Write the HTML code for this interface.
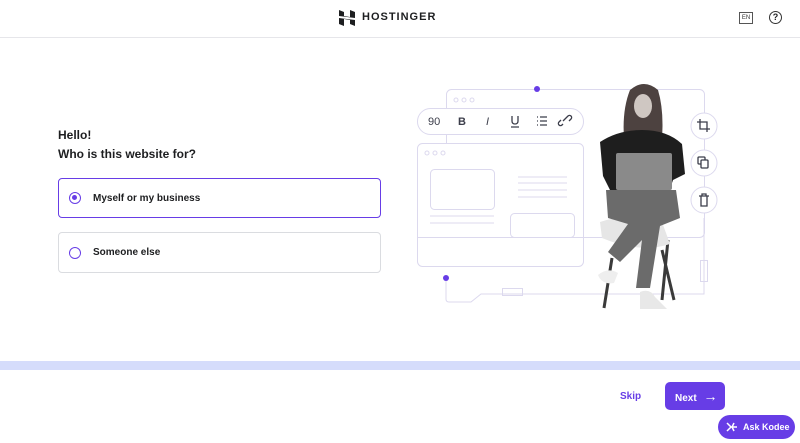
<!DOCTYPE html>
<html><head><meta charset="utf-8"><style>
*{margin:0;padding:0;box-sizing:border-box}
body{width:800px;height:443px;overflow:hidden;background:#fff;font-family:"Liberation Sans",sans-serif;color:#1d1e20;position:relative}
.abs{position:absolute}
.hdr{left:0;top:0;width:800px;height:38px;border-bottom:1px solid #e6e6ea}
.opt{position:absolute;left:58px;width:323px;border-radius:4px;font-size:10px;font-weight:bold;display:flex;align-items:center;padding-left:10px}
.radio{width:12px;height:12px;border-radius:50%;border:1.5px solid #673de6;margin-right:12px;position:relative}
</style></head><body>
<div class="abs hdr"></div>
<svg class="abs" style="left:338px;top:9px" width="18" height="18" viewBox="0 0 18 18"><path d="M1 1l5 2v4l6 1V1l5 2v6l-16-2z M1 9l16 2v6l-5-2v-4l-6-1v7l-5-2z" fill="#1d1e20"/></svg>
<div class="abs" style="left:362px;top:11px;font-size:11px;font-weight:bold;letter-spacing:1px">HOSTINGER</div>
<div class="abs" style="left:739px;top:12px;width:14px;height:12px;border:1px solid #555;font-size:6px;text-align:center;line-height:10px;color:#333">EN</div>
<div class="abs" style="left:769px;top:11px;width:13px;height:13px;border:1.5px solid #333;border-radius:50%;font-size:9px;font-weight:bold;text-align:center;line-height:10px">?</div>

<div class="abs" style="left:58px;top:128px;font-size:12px;font-weight:bold">Hello!</div>
<div class="abs" style="left:58px;top:147px;font-size:12px;font-weight:bold">Who is this website for?</div>
<div class="opt" style="top:178px;height:40px;border:1.5px solid #673de6"><div class="radio"><div style="position:absolute;left:2px;top:2px;width:5px;height:5px;border-radius:50%;background:#673de6"></div></div>Myself or my business</div>
<div class="opt" style="top:232px;height:41px;border:1px solid #dadce0"><div class="radio"></div>Someone else</div>

<svg class="abs" style="left:400px;top:80px" width="330" height="240" viewBox="400 80 330 240">
<g fill="none" stroke="#dcd9ee" stroke-width="1">
<rect x="446.5" y="89.5" width="258" height="148" rx="5"/>
<rect x="417.5" y="143.5" width="166" height="123" rx="5" fill="#fff"/>
<line x1="417" y1="237.5" x2="583" y2="237.5"/>
<rect x="430.5" y="169.5" width="64" height="40" rx="4"/>
<rect x="510.5" y="213.5" width="64" height="24" rx="4"/>
<path d="M518 177h49M518 183h49M518 190h49M518 197h49M430 216h64M430 223h64"/>
<path d="M446 278v21q0 3 3 3h22l10-8h223v-76M704 250v-20"/>
<rect x="502.5" y="288.5" width="20" height="7"/>
<rect x="700.5" y="260.5" width="7" height="21"/>
<circle cx="456" cy="100" r="2"/><circle cx="464" cy="100" r="2"/><circle cx="472" cy="100" r="2"/>
<circle cx="427" cy="153" r="2"/><circle cx="435" cy="153" r="2"/><circle cx="443" cy="153" r="2"/>
<rect x="417.5" y="108.5" width="166" height="26" rx="13" fill="#fff"/>
<circle cx="704" cy="126" r="13" fill="#fff"/><circle cx="704" cy="163" r="13" fill="#fff"/><circle cx="704" cy="200" r="13" fill="#fff"/>
</g>
<circle cx="537" cy="89" r="3" fill="#673de6"/><circle cx="446" cy="278" r="3" fill="#673de6"/>
<g font-family="Liberation Sans" font-size="11" fill="#3b3d4a"><text x="428" y="125">90</text><text x="458" y="125" font-weight="bold">B</text><text x="486" y="125" font-style="italic">I</text></g>
<g stroke="#3b3d4a" stroke-width="1.3" fill="none">
<path d="M512 116v5q0 3 3 3t3-3v-5M511 127h8M537 117h1M537 121h1M537 125h1M540 117h7M540 121h7M540 125h7"/>
<path d="M563 124l-1 1a2 2 0 01-3-3l2-2M567 117l1-1a2 2 0 013 3l-2 2M563 121l4-4"/>
<path d="M700 119v10h10M697 122h10v10"/>
<rect x="698" y="157" width="7" height="7" rx="1"/><rect x="701" y="160" width="7" height="8" rx="1" fill="#fff"/>
<path d="M699 196h10M701 196v10h6v-10M702 196v-2h4v2"/>
</g>
<!-- person -->
<g>
<path d="M612 258l-8 50M662 250l12 50M668 240l-6 60" stroke="#3a3a3a" stroke-width="3"/>
<path d="M600 222q30-10 62 0l8 22q-30 10-68-6z" fill="#e6e6e6"/>
<path d="M630 90q14-12 28 0q6 20 4 48h-38q-2-28 6-48z" fill="#4d4240"/>
<ellipse cx="643" cy="106" rx="9" ry="12" fill="#cfc7c2"/>
<path d="M600 142q18-12 42-12q25 0 40 14l3 30l-12 6l-4 12h-58l-8-16z" fill="#1e1e1e"/>
<rect x="616" y="153" width="56" height="37" rx="2" fill="#8a8a8a"/>
<path d="M606 190h70l4 28l-20 8l-10 62h-14l6-48l-22 22l-12-10l20-28l-20-6z" fill="#6b6b6b"/>
<path d="M598 275q10-8 20-2l-4 10q-12 2-16-8z" fill="#eee"/>
<path d="M640 292q10-4 15 5l12 12h-27z" fill="#e8e8e8"/>
</g>
</svg>

<div class="abs" style="left:0;top:361px;width:800px;height:9px;background:#d5dcfb"></div>
<div class="abs" style="left:620px;top:391px;font-size:10px;font-weight:bold;color:#673de6">Skip</div>
<div class="abs" style="left:665px;top:382px;width:60px;height:28px;border-radius:5px;background:#673de6;color:#fff;font-size:10px;font-weight:bold;line-height:28px;padding-left:10px">Next <span style="font-size:14px;font-weight:normal;margin-left:4px">→</span></div>
<div class="abs" style="left:718px;top:415px;width:77px;height:24px;border-radius:12px;background:#673de6;color:#fff;font-size:9px;font-weight:bold;line-height:24px;padding-left:25px">Ask Kodee</div>
<svg class="abs" style="left:726px;top:421px" width="12" height="12" viewBox="0 0 12 12"><path d="M1 2l4 4-4 4M5 6h6M8 2l-2 4 2 4" stroke="#fff" stroke-width="1.5" fill="none"/></svg>
</body></html>
